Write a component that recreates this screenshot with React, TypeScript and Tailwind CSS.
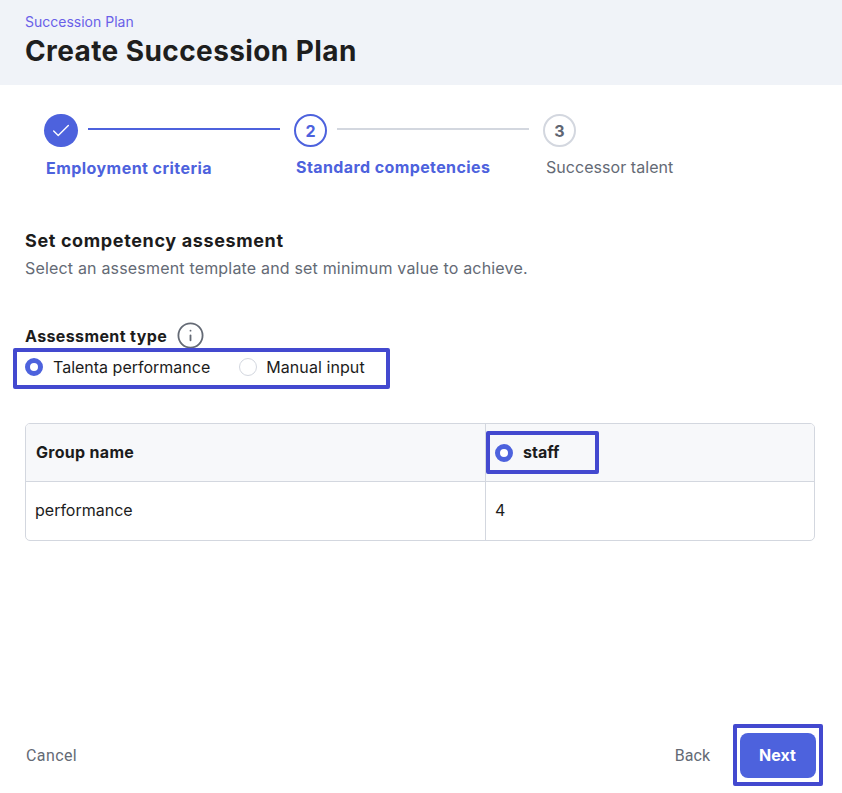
import { Check, Info } from "lucide-react"

function Radio({ checked }: { checked?: boolean }) {
  if (checked) {
    return <span className="h-[18px] w-[18px] shrink-0 rounded-full border-[5px] border-[#4d62dd] bg-white" />
  }
  return <span className="h-[18px] w-[18px] shrink-0 rounded-full border border-[#d3d7df] bg-white" />
}

export default function App() {
  return (
    <div className="flex h-[793px] w-[842px] flex-col overflow-hidden bg-white font-['Inter',sans-serif] text-[#1c1c1c]">
      {/* Page title */}
      <header className="flex h-[85px] shrink-0 flex-col bg-[#f0f3f8] pl-[25px] pt-[14px]">
        <div className="text-sm leading-4 text-[#6a5fe8]">Succession Plan</div>
        <h1 className="mt-[4px] text-[28px] font-bold leading-[34px] tracking-[0.4px] text-[#1e1e1e]">Create Succession Plan</h1>
      </header>

      {/* Stepper */}
      <div className="ml-[44px] mt-[29px] flex h-[33px] items-center">
        <span className="flex h-[33px] w-[34px] items-center justify-center rounded-full bg-[#4d62dd]">
          <Check size={22} strokeWidth={1.5} className="text-white" />
        </span>
        <span className="mb-[3px] ml-[10px] h-[2px] w-[192px] bg-[#4d62dd]" />
        <span className="ml-[14px] flex h-[33px] w-[33px] items-center justify-center rounded-full border-2 border-[#4d62dd] text-base font-bold text-[#4d62dd]">2</span>
        <span className="mb-[3px] ml-[10px] h-[2px] w-[192px] bg-[#d3d7df]" />
        <span className="ml-[14px] flex h-[33px] w-[33px] items-center justify-center rounded-full border-2 border-[#d3d7df] text-base font-bold text-[#5f6672]">3</span>
      </div>
      <div className="mt-[10px] flex h-5 items-start text-base leading-5">
        <span className="ml-[46px] mt-[1px] w-[250px] font-bold tracking-[0.45px] text-[#4d62dd]">Employment criteria</span>
        <span className="w-[250px] font-bold tracking-[0.4px] text-[#4d62dd]">Standard competencies</span>
        <span className="tracking-[0.05px] text-[#646a75]">Successor talent</span>
      </div>

      {/* Section heading */}
      <h2 className="ml-[25px] mt-[52px] text-lg font-bold leading-[24px] tracking-[0.63px]">Set competency assesment</h2>
      <p className="ml-[25px] mt-[5px] text-base leading-5 tracking-[0.18px] text-[#646a75]">Select an assesment template and set minimum value to achieve.</p>

      {/* Assessment type */}
      <div className="ml-[25px] mt-[45px] flex h-[25px] items-center gap-[9px]">
        <span className="text-base font-bold tracking-[0.38px]">Assessment type</span>
        <Info size={29} strokeWidth={1.5} className="text-[#646a75]" />
      </div>
      <div className="ml-[13px] flex h-[41px] w-[377px] items-center rounded-[2px] border-4 border-[#4349cf] pb-[4px] pl-2 text-base">
        <Radio checked />
        <span className="ml-[10px]">Talenta performance</span>
        <span className="ml-[29px] flex items-center">
          <Radio />
          <span className="ml-[9px] tracking-[0.08px]">Manual input</span>
        </span>
      </div>

      {/* Table */}
      <div className="ml-[25px] mt-[34px] h-[118px] w-[790px] overflow-hidden rounded-[5px] border border-[#d3d7df] text-base">
        <div className="flex h-[58px] border-b border-[#d3d7df] bg-[#f7f8fa]">
          <div className="flex w-[460px] items-center border-r border-[#d3d7df] pb-[2px] pl-[10px] font-bold tracking-[0.3px]">Group name</div>
          <div className="pt-[7px]">
            <div className="flex h-[43px] w-[113px] items-center rounded-[2px] border-4 border-[#4349cf] pl-[5px] font-bold">
              <Radio checked />
              <span className="mb-[2px] ml-[10px]">staff</span>
            </div>
          </div>
        </div>
        <div className="flex h-[58px]">
          <div className="flex w-[460px] items-center border-r border-[#d3d7df] pb-[2px] pl-[9px]">performance</div>
          <div className="flex items-center pb-[2px] pl-[9px]">4</div>
        </div>
      </div>

      {/* Footer actions */}
      <div className="mt-[183px] flex h-[62px] items-center justify-between pl-[26px] pr-[19px] text-base text-[#646a75]">
        <button className="pt-[2px] font-['Roboto',sans-serif] tracking-[0.4px]">Cancel</button>
        <div className="flex items-center">
          <button className="pt-[2px] font-['Roboto',sans-serif]">Back</button>
          <div className="ml-[23px] flex h-[62px] w-[90px] items-center rounded-[2px] border-4 border-[#4349cf] pl-[3px]">
            <button className="h-[45px] w-[76px] rounded-lg bg-[#4d62dd] pr-[1px] font-bold text-white">Next</button>
          </div>
        </div>
      </div>
    </div>
  )
}
